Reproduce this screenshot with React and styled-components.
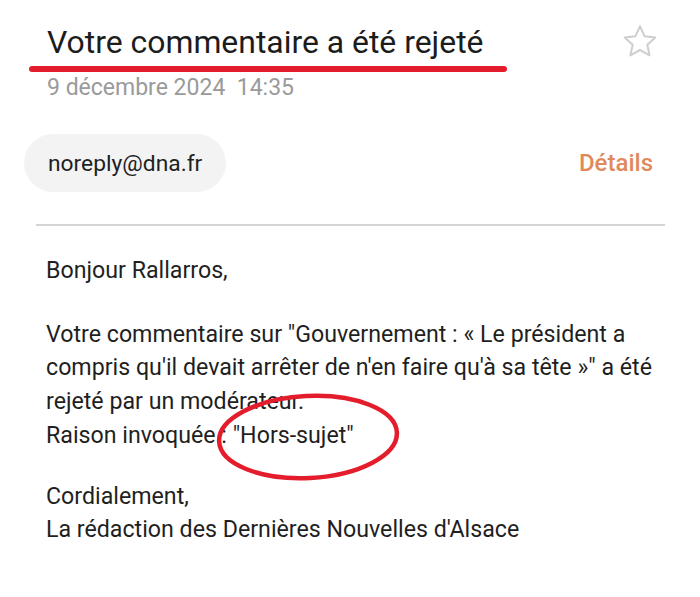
import React from "react";
import styled, { createGlobalStyle } from "styled-components";

const Global = createGlobalStyle`
  html, body { margin: 0; padding: 0; background: #ffffff; }
  body { font-family: Roboto, "Noto Sans", sans-serif; color: #1f1f1f; }
`;

const Page = styled.div`
  position: relative;
  width: 700px;
  height: 597px;
  overflow: hidden;
  background: #fff;
`;

const Header = styled.header`
  display: flex;
  justify-content: space-between;
  align-items: flex-start;
  padding: 20px 38px 0 47px;
`;

const TitleBlock = styled.div`
  position: relative;
  display: flex;
  flex-direction: column;
`;

const Title = styled.h1`
  margin: 0;
  font-size: 31.9px;
  font-weight: 400;
  line-height: 44px;
  color: #1c1c1c;
`;

const DateLine = styled.div`
  margin-top: 11px;
  font-size: 23px;
  line-height: 26px;
  color: #9a9a9a;
  white-space: pre;
`;

const Underline = styled.span`
  position: absolute;
  left: -18px;
  top: 46px;
  width: 478px;
  height: 6px;
  border-radius: 3px;
  background: #e31d2b;
`;

const StarButton = styled.div`
  width: 44px;
  height: 44px;
  display: flex;
  align-items: center;
  justify-content: center;
`;

const SenderRow = styled.div`
  display: flex;
  align-items: center;
  justify-content: space-between;
  padding: 33px 47px 0 24px;
`;

const Chip = styled.div`
  height: 58px;
  padding: 0 24px;
  border-radius: 29px;
  background: #f3f3f3;
  display: flex;
  align-items: center;
  font-size: 22.8px;
  color: #1f1f1f;
`;

const DetailsLink = styled.span`
  font-size: 24px;
  font-weight: 500;
  color: #e08a5c;
`;

const Divider = styled.hr`
  margin: 32px 35px 0 36px;
  border: none;
  border-top: 2px solid #d4d4d4;
`;

const Body = styled.div`
  position: relative;
  padding: 28px 0 0 46px;
  font-size: 23.2px;
  line-height: 33.7px;
  color: #1f1f1f;
`;

const Para = styled.p`
  margin: 0 0 ${(p) => p.$gap ?? 30}px 0;
`;

const Circle = styled.svg`
  position: absolute;
  left: 212px;
  top: 168px;
  overflow: visible;
  pointer-events: none;
`;

function StarIcon() {
  return (
    <svg width="42" height="40" viewBox="0 0 24 24" fill="none" stroke="#cfcfcf" strokeWidth="1.25" strokeLinejoin="round">
      <path d="M12 2.6l2.75 5.9 6.45.75-4.8 4.4 1.3 6.35L12 16.8l-5.7 3.2 1.3-6.35-4.8-4.4 6.45-.75z" />
    </svg>
  );
}

export default function App() {
  return (
    <Page>
      <Global />
      <Header>
        <TitleBlock>
          <Title>Votre commentaire a été rejeté</Title>
          <Underline />
          <DateLine>{"9 décembre 2024  14:35"}</DateLine>
        </TitleBlock>
        <StarButton>
          <StarIcon />
        </StarButton>
      </Header>
      <SenderRow>
        <Chip>noreply@dna.fr</Chip>
        <DetailsLink>Détails</DetailsLink>
      </SenderRow>
      <Divider />
      <Body>
        <Para>Bonjour Rallarros,</Para>
        <Para $gap={27}>
          Votre commentaire sur "Gouvernement : « Le président a
          <br />
          compris qu'il devait arrêter de n'en faire qu'à sa tête »" a été
          <br />
          rejeté par un modérateur.
          <br />
          Raison invoquée : "Hors-sujet"
        </Para>
        <Para $gap={0}>
          Cordialement,
          <br />
          La rédaction des Dernières Nouvelles d'Alsace
        </Para>
        <Circle width="190" height="90" viewBox="0 0 190 90">
          <ellipse cx="96" cy="43" rx="89" ry="41" fill="none" stroke="#e31d2b" strokeWidth="4.5" transform="rotate(-3 96 43)" />
        </Circle>
      </Body>
    </Page>
  );
}
